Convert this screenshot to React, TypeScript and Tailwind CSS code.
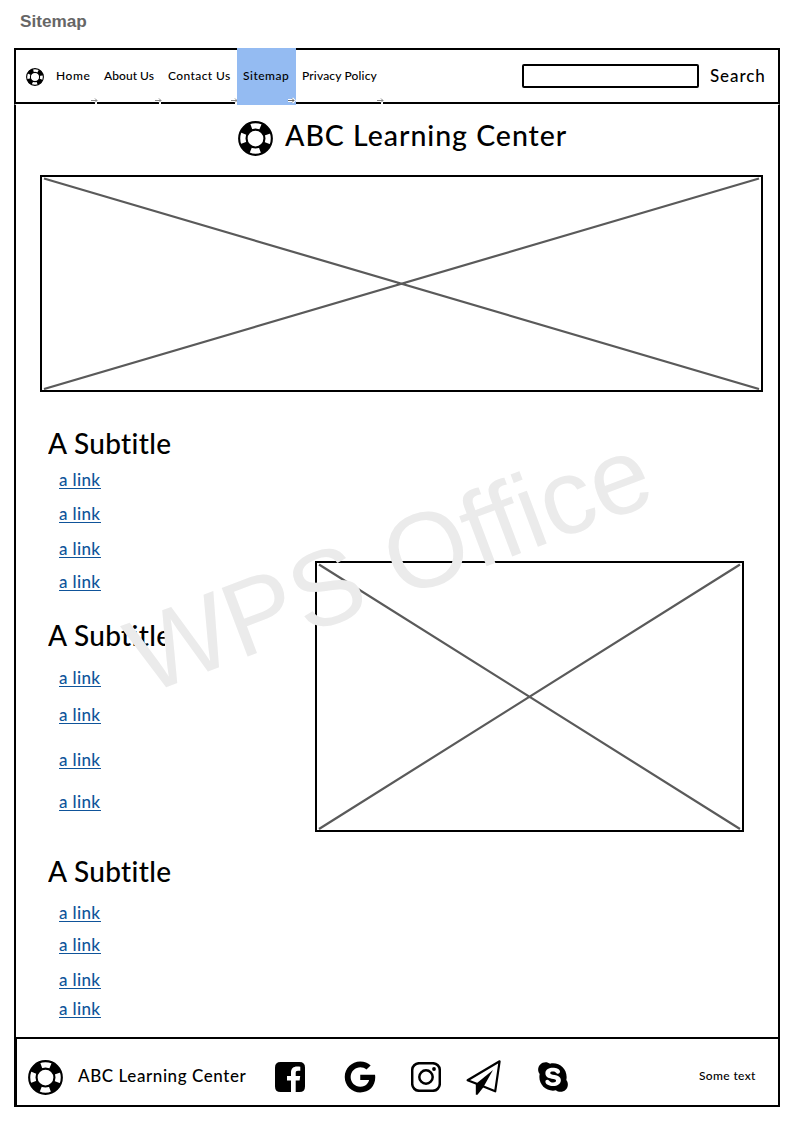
import React from "react";
import { FaGoogle, FaSkype } from "react-icons/fa";

function LifeRing({ className }: { className: string }) {
  return (
    <svg viewBox="0 0 36 36" className={className}>
      <circle cx="18" cy="18" r="16.8" fill="none" stroke="black" strokeWidth="2.2" />
      <circle cx="18" cy="18" r="13" fill="none" stroke="black" strokeWidth="8" strokeDasharray="10.8 9.62" strokeDashoffset="-4.81" />
      <circle cx="18" cy="18" r="9.2" fill="none" stroke="black" strokeWidth="2.2" />
    </svg>
  );
}

function Arrow() {
  return (
    <svg viewBox="0 0 9 7" className="absolute -right-[7px] -bottom-[2px] h-[7px] w-[9px]">
      <path d="M5 4H7V7H5z" fill="white" />
      <path d="M1 3.5H7M5 1.5L7 3.5L5 5.5" fill="none" stroke="#888" strokeWidth="1" />
    </svg>
  );
}

function Placeholder({ className, w, h }: { className: string; w: number; h: number }) {
  return (
    <div className={className}>
      <svg viewBox={`0 0 ${w} ${h}`} className="block h-full w-full">
        <path d={`M2 1.5L${w - 2} ${h - 1}M${w - 2} 1.5L2 ${h - 1}`} fill="none" stroke="#5a5a5a" strokeWidth="2.2" />
      </svg>
    </div>
  );
}

function Subtitle({ className }: { className: string }) {
  return <h3 className={`ml-[32px] h-[36px] overflow-hidden text-[28px] leading-[36px] tracking-[0.35px] whitespace-nowrap ${className}`}>A Subtitle</h3>;
}

function TextLink({ className }: { className: string }) {
  return (
    <a className={`ml-[43px] block h-[20px] w-[42px] border-b border-[#0f549a] text-[17px] leading-[21px] tracking-[0.35px] whitespace-nowrap text-[#0f549a] ${className}`}>
      a link
    </a>
  );
}

export default function App() {
  return (
    <div className="relative h-[1122px] w-[793px] overflow-hidden bg-white font-['Lato','Noto_Sans',sans-serif] font-medium text-black">
      <h1 className="h-[48px] pt-[11px] pl-5 font-['Liberation_Sans',Arial,sans-serif] text-[17.2px] leading-5 font-bold text-[#666]">Sitemap</h1>

      <div className="ml-[14px] flex w-[766px] flex-col">
        <header className="flex h-[56px] w-[766px] border-2 border-black">
          <LifeRing className="mt-[18px] ml-[10px] size-[18px] shrink-0" />
          <nav className="flex h-[52px] text-[12px] leading-[52px] whitespace-nowrap">
            <a className="relative ml-[12px] w-[36px] tracking-[0.55px]">Home<Arrow /></a>
            <a className="relative ml-[12px] w-[52px] tracking-[0.05px]">About Us<Arrow /></a>
            <a className="relative ml-[12px] w-[64px] tracking-[0.4px]">Contact Us<Arrow /></a>
            <a className="relative -mt-[2px] ml-[5px] h-[57px] w-[59px] bg-[#94bbf2] pl-[6px] leading-[56px] tracking-[0.5px]">
              Sitemap
              <svg viewBox="0 0 9 7" className="absolute right-0 bottom-[1px] h-[7px] w-[9px]">
                <path d="M1 3.5H7M5 1.5L7 3.5L5 5.5" fill="none" stroke="white" strokeWidth="3" />
                <path d="M1 3.5H7M5 1.5L7 3.5L5 5.5" fill="none" stroke="#666" strokeWidth="1" />
              </svg>
            </a>
            <a className="relative ml-[6px] w-[76px] tracking-[0.15px]">Privacy Policy<Arrow /></a>
          </nav>
          <div className="mt-[14px] ml-auto h-[24px] w-[177px] rounded-[2px] border-2 border-black" />
          <span className="mr-[12px] ml-[11px] w-[56px] text-[17px] leading-[51px] tracking-[0.9px] whitespace-nowrap">Search</span>
        </header>

        <main className="flex h-[933px] flex-col border-x-2 border-t border-x-black border-t-white">
          <div className="flex h-[70px] pl-[222px]">
            <LifeRing className="mt-[16px] size-[35px] shrink-0" />
            <h2 className="mt-[12px] ml-[12px] text-[28.5px] leading-[36px] tracking-[0.97px] whitespace-nowrap">ABC Learning Center</h2>
          </div>
          <Placeholder className="ml-[24px] h-[217px] w-[723px] border-2 border-black" w={719} h={213} />
          <div className="flex">
            <div className="w-[299px] shrink-0 pt-[33px]">
              <Subtitle className="" />
              <TextLink className="mt-[8px]" />
              <TextLink className="mt-[14px]" />
              <TextLink className="mt-[15px]" />
              <TextLink className="mt-[13px]" />
              <Subtitle className="mt-[26px] w-[117px]" />
              <TextLink className="mt-[14px]" />
              <TextLink className="mt-[17px]" />
              <TextLink className="mt-[25px]" />
              <TextLink className="mt-[22px]" />
              <Subtitle className="mt-[42px]" />
              <TextLink className="mt-[13px]" />
              <TextLink className="mt-[12px]" />
              <TextLink className="mt-[15px]" />
              <TextLink className="mt-[9px]" />
            </div>
            <Placeholder className="mt-[169px] h-[271px] w-[429px] border-2 border-black" w={425} h={267} />
          </div>
        </main>

        <footer className="flex h-[70px] w-[766px] border-2 border-l-3 border-black">
          <LifeRing className="mt-[21px] ml-[11px] size-[35px] shrink-0" />
          <span className="ml-[15px] w-[197px] shrink-0 text-[17px] leading-[74px] tracking-[0.58px] whitespace-nowrap">ABC Learning Center</span>
          <svg viewBox="0 0 30 30" className="mt-[23px] size-[30px] shrink-0">
            <path d="M5.5 0H24.5Q30 0 30 5.5V24.5Q30 30 24.5 30H20.7V18.4H24.6L25.2 13.9H20.7V11C20.7 9.6 21.2 8.8 23 8.8H25.3V4.8C24.6 4.7 23.5 4.6 22 4.6C18.4 4.6 16 6.7 16 10.5V13.9H12V18.4H16V30H5.5Q0 30 0 24.5V5.5Q0 0 5.5 0Z" />
          </svg>
          <FaGoogle className="mt-[22px] ml-[39px] size-[32px] shrink-0" />
          <svg viewBox="0 0 30 30" className="mt-[23px] ml-[35px] size-[30px] shrink-0">
            <rect x="1.2" y="1.2" width="27.6" height="27.6" rx="7" fill="none" stroke="black" strokeWidth="2.5" />
            <circle cx="15" cy="15" r="6.7" fill="none" stroke="black" strokeWidth="2.5" />
            <circle cx="23" cy="7" r="1.9" />
          </svg>
          <svg viewBox="0 0 35 35" className="mt-[21px] ml-[25px] size-[35px] shrink-0">
            <path d="M33.6 1.3L1.6 20.2L10 23.6L29.2 31.3Z" fill="white" stroke="black" strokeWidth="2.2" strokeLinejoin="round" />
            <path d="M27 10L9.8 24V34.8H11.5L17 27.8Z" />
          </svg>
          <FaSkype className="mt-[21px] ml-[35px] size-[34px] shrink-0" />
          <span className="mr-[22px] ml-auto w-[57px] text-[12px] leading-[74px] tracking-[0.35px] whitespace-nowrap">Some text</span>
        </footer>
      </div>

      <div className="pointer-events-none absolute top-[606px] left-[146px] origin-[0_84.65%] -rotate-[20.7deg] font-['Liberation_Sans',Arial,sans-serif] text-[106.5px] leading-none font-normal whitespace-nowrap text-[#ebebeb] [font-variant-ligatures:none]">
        WPS Office
      </div>
    </div>
  );
}
